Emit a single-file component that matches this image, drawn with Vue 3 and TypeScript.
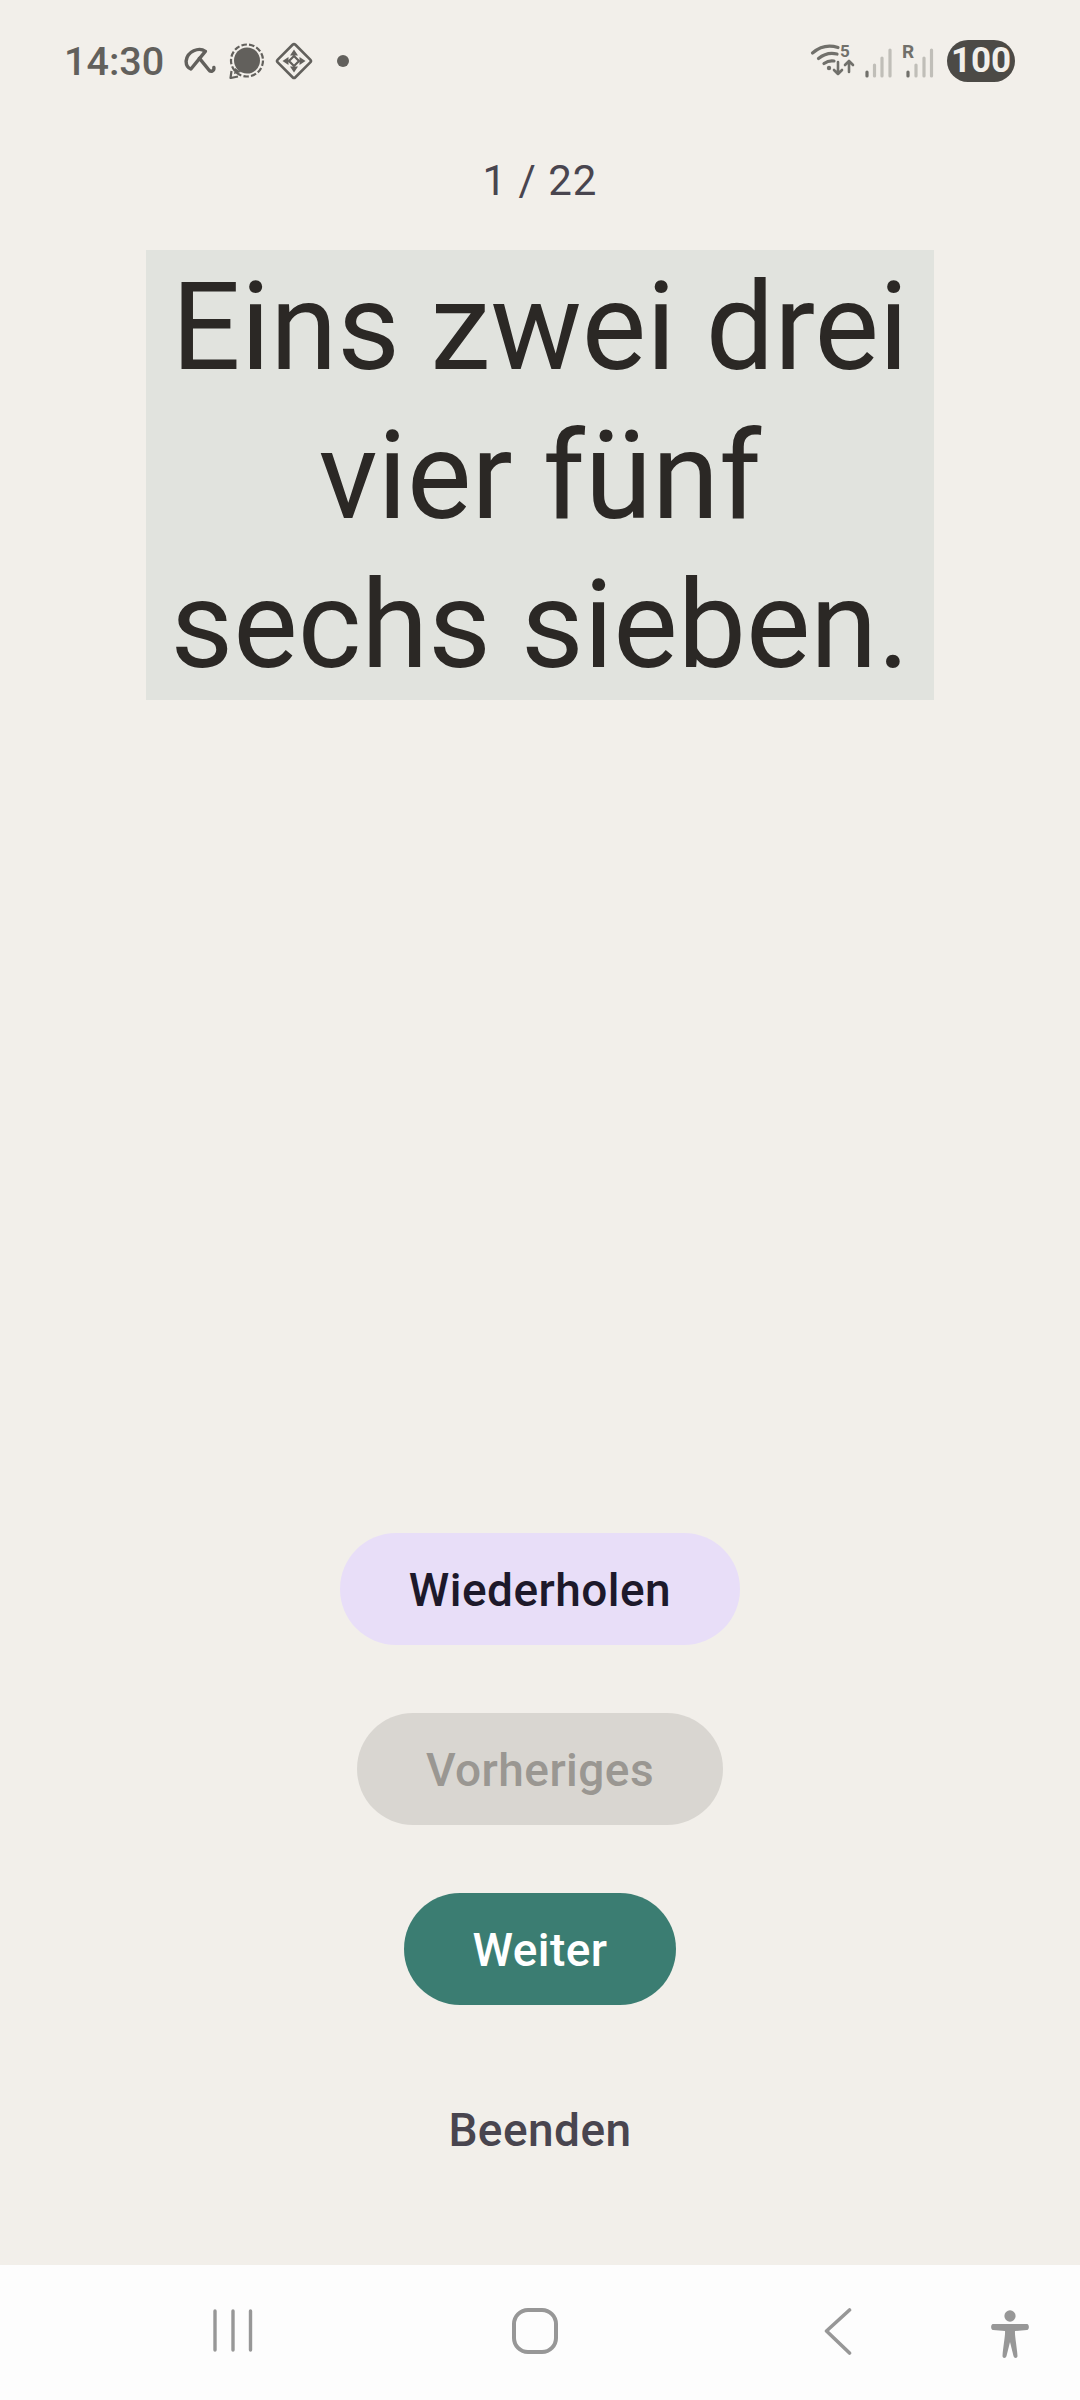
<script setup lang="ts">
const sentence = ['Eins zwei drei', 'vier fünf', 'sechs sieben.'];
const position = { current: 1, total: 22 };
</script>

<template>
  <div class="screen">
    <header class="status-bar">
      <div class="status-left">
        <span class="time">14:30</span>
        <svg class="icon-avira" width="32" height="28" viewBox="0 0 30 26" fill="none" stroke="#62605c" stroke-width="3.2" stroke-linecap="round" stroke-linejoin="round">
          <path d="M20 4C14 -0.5 3 4 2 13C1.8 17 4 20 6.5 20.5L20 4" />
          <path d="M14.5 10.5L23 21C25 24 28.5 22.5 28 19" />
        </svg>
        <svg class="icon-signal" width="36" height="36" viewBox="0 0 36 36">
          <circle cx="18" cy="17.5" r="16" fill="none" stroke="#62605c" stroke-width="2.2" stroke-dasharray="5.5 2.2" />
          <circle cx="18" cy="17.5" r="13" fill="#62605c" />
          <path d="M2.5 28L1.5 35L9 33.5" fill="none" stroke="#62605c" stroke-width="2.2" stroke-linejoin="round" />
          <path d="M6 25L5 31L12 29Z" fill="#62605c" />
        </svg>
        <svg class="icon-diamond" width="38" height="38" viewBox="0 0 38 38">
          <rect x="6.5" y="6.5" width="25" height="25" rx="2" transform="rotate(45 19 19)" fill="none" stroke="#62605c" stroke-width="2.6" />
          <path d="M19 7.5L23 13.5H15Z M19 30.5L15 24.5H23Z M7.5 19L13.5 15V23Z M30.5 19L24.5 23V15Z" fill="#62605c" />
          <path d="M19 14L24 19L19 24L14 19Z" fill="none" stroke="#62605c" stroke-width="2.2" />
        </svg>
        <span class="dot"></span>
      </div>
      <div class="status-right">
        <svg width="46" height="48" viewBox="0 -6 46 48" fill="none" stroke="#71706b" stroke-linecap="round">
          <path d="M2.5 10Q14 0 28 4.5" stroke-width="3.2" />
          <path d="M8.5 15.5Q17 8.5 27 11" stroke-width="3.2" />
          <path d="M14 20.5Q19 17 24 18" stroke-width="3.2" />
          <circle cx="19" cy="25" r="2.2" fill="#71706b" stroke="none" />
          <path d="M28 19V31M24 27L28 31L32 27" stroke-width="2.6" stroke-linejoin="round" />
          <path d="M39 29V18M35 22L39 18L43 22" stroke-width="2.6" stroke-linejoin="round" />
          <text x="30" y="14" class="tiny" stroke="none" fill="#71706b">5</text>
        </svg>
        <svg width="30" height="34" viewBox="0 0 30 34" stroke-width="3.2" stroke-linecap="round">
          <path d="M3 28V32" stroke="#71706b" />
          <path d="M10.5 21V32M18 14V32M26 6V32" stroke="#c0beb8" />
        </svg>
        <svg width="34" height="48" viewBox="0 -6 34 48" stroke-width="3.2" stroke-linecap="round">
          <text x="0" y="15" class="tiny-r" fill="#71706b">R</text>
          <path d="M6 29V33" stroke="#71706b" />
          <path d="M14 22V33M22 15V33M29.5 7V33" stroke="#c0beb8" />
        </svg>
        <span class="battery">100</span>
      </div>
    </header>

    <main class="content">
      <div class="counter">{{ position.current }} / {{ position.total }}</div>
      <div class="sentence">
        <div v-for="line in sentence" :key="line">{{ line }}</div>
      </div>
    </main>

    <section class="actions">
      <button class="btn btn-repeat">Wiederholen</button>
      <button class="btn btn-prev" disabled>Vorheriges</button>
      <button class="btn btn-next">Weiter</button>
      <button class="btn btn-quit">Beenden</button>
    </section>

    <nav class="nav-bar">
      <svg class="nav-recents" width="42" height="44" viewBox="0 0 42 44" stroke="#979797" stroke-width="3.4" stroke-linecap="round">
        <path d="M3 2V41M21 2V41M38.5 2V41" />
      </svg>
      <svg class="nav-home" width="48" height="48" viewBox="0 0 48 48" fill="none" stroke="#979797" stroke-width="4">
        <rect x="3" y="3" width="42" height="42" rx="14" />
      </svg>
      <svg class="nav-back" width="28" height="48" viewBox="0 0 28 48" fill="none" stroke="#979797" stroke-width="3.6" stroke-linecap="round" stroke-linejoin="round">
        <path d="M25.5 2L2.5 23L25.5 45" />
      </svg>
      <svg class="nav-a11y" width="40" height="50" viewBox="0 0 40 50" fill="#979797">
        <ellipse cx="20" cy="7" rx="5.6" ry="5.8" />
        <path d="M3 15H37C39.5 15 39.5 21 37 21L25 22C24.5 26 27 38 27.5 47C27.5 49.5 24 49.5 23.5 47L20 33L16.5 47C16 49.5 12.5 49.5 12.5 47C13 38 15.5 26 15 22L3 21C0.5 21 0.5 15 3 15Z" />
      </svg>
    </nav>
  </div>
</template>

<style>
html,
body {
  margin: 0;
  background: #f2efea;
}
</style>

<style scoped>
.screen {
  width: 1080px;
  height: 2400px;
  display: flex;
  flex-direction: column;
  background: #f2efea;
  font-family: Roboto, "Liberation Sans", sans-serif;
  overflow: hidden;
}

.status-bar {
  height: 120px;
  display: flex;
  align-items: center;
  justify-content: space-between;
  padding: 2px 65px 0 64px;
  box-sizing: border-box;
}

.status-left,
.status-right {
  display: flex;
  align-items: center;
}

.time {
  font-size: 39.5px;
  font-weight: 500;
  color: #62605c;
  margin-right: 20px;
}

.icon-signal {
  margin-left: 13px;
}

.icon-diamond {
  margin-left: 10px;
}

.dot {
  width: 12px;
  height: 12px;
  border-radius: 50%;
  background: #62605c;
  margin-left: 24px;
}

.tiny {
  font: 700 17px Roboto, sans-serif;
}

.tiny-r {
  font: 700 19px Roboto, sans-serif;
}

.status-right {
  gap: 8px;
}

.battery {
  width: 68px;
  height: 42px;
  margin-left: 3px;
  border-radius: 21px;
  background: #4c4a46;
  color: #f2efea;
  font-size: 35px;
  font-weight: 700;
  line-height: 42px;
  text-align: center;
}

.content {
  flex: 1;
  display: flex;
  flex-direction: column;
  align-items: center;
}

.counter {
  margin: 37px 0 45px;
  font-size: 42px;
  line-height: 48px;
  color: #49454f;
  letter-spacing: 1px;
}

.sentence {
  width: 788px;
  padding-top: 3px;
  background: #e1e3de;
  color: #2b2825;
  font-size: 121.5px;
  line-height: 149px;
  text-align: center;
}

.actions {
  display: flex;
  flex-direction: column;
  align-items: center;
  gap: 68px;
  padding-bottom: 80px;
}

.btn {
  height: 112px;
  padding: 2px 68.5px 0;
  border: none;
  border-radius: 56px;
  font-family: inherit;
  font-size: 46px;
  font-weight: 500;
  letter-spacing: 0.45px;
  cursor: pointer;
}

.btn-repeat {
  background: #e8def8;
  color: #1d192b;
}

.btn-prev {
  background: #d9d6d1;
  color: #9a9792;
}

.btn-next {
  background: #3b7d72;
  color: #ffffff;
}

.btn-quit {
  background: transparent;
  color: #49454f;
}

.nav-bar {
  height: 135px;
  position: relative;
  background: #fdfdfd;
}

.nav-bar svg {
  position: absolute;
}

.nav-recents {
  left: 212px;
  top: 44px;
}

.nav-home {
  left: 511px;
  top: 42px;
}

.nav-back {
  left: 824px;
  top: 43px;
}

.nav-a11y {
  left: 990px;
  top: 44px;
}
</style>
